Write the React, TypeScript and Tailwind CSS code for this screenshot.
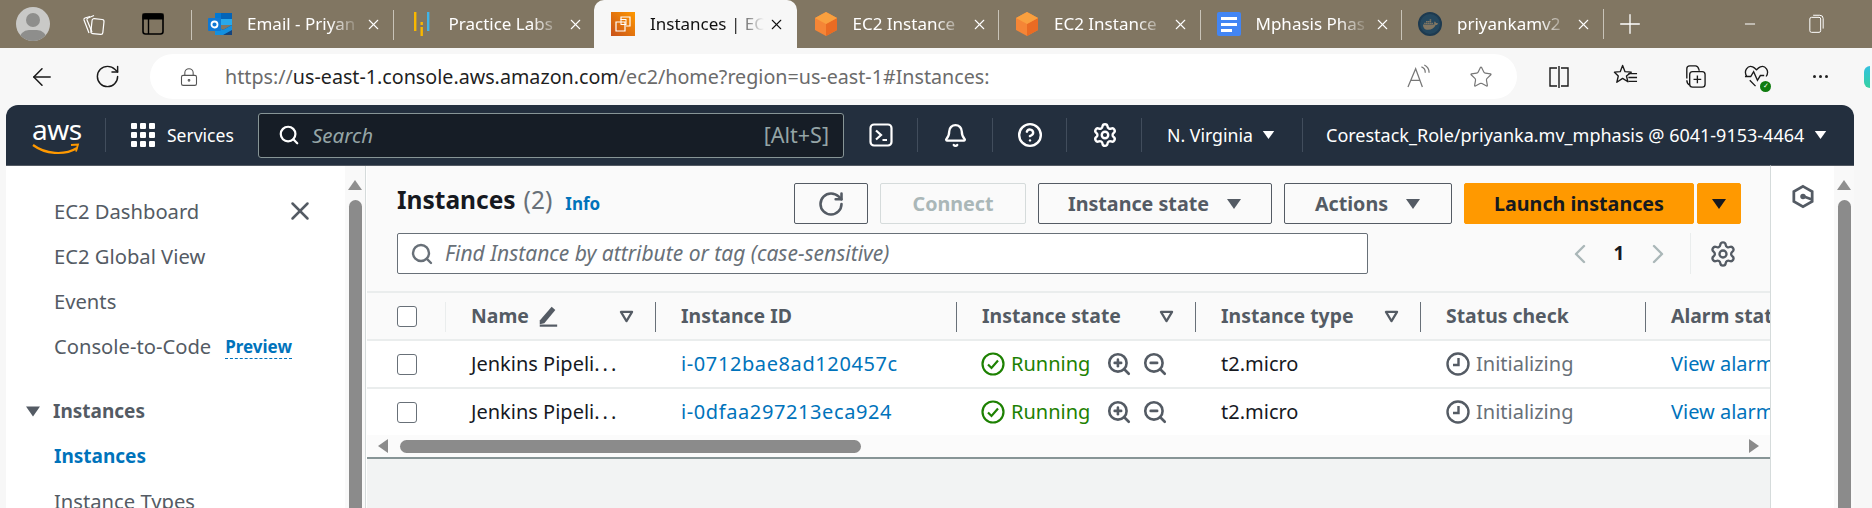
import React from 'react';
import {
  ArrowLeft,
  Bell,
  CircleHelp,
  Minus,
  Plus,
  RotateCw,
  Search,
  Settings,
  X,
  ChevronLeft,
  ChevronRight,
  Star,
  LockKeyhole,
  ZoomIn,
  ZoomOut,
} from 'lucide-react';
import { FaDocker } from 'react-icons/fa';

const Caret = ({ className = '' }: { className?: string }) => (
  <svg viewBox="0 0 16 12" className={className}>
    <path d="M1 1h14L8 11z" fill="currentColor" />
  </svg>
);

const FilterCaret = () => (
  <svg viewBox="0 0 16 14" className="w-[15px] h-[13px] text-[#545b64]">
    <path d="M2 2h12L8 12z" fill="none" stroke="currentColor" strokeWidth="2.4" strokeLinejoin="round" />
  </svg>
);

const Outlook = () => (
  <svg viewBox="0 0 24 24" className="w-6 h-6">
    <rect x="7" y="1" width="17" height="12" fill="#28a8ea" />
    <rect x="7" y="1" width="6" height="6" fill="#0078d4" />
    <rect x="13" y="1" width="11" height="6" fill="#0364b8" />
    <path d="M7 13l8 5 9-5v10H7z" fill="#14447d" />
    <path d="M7 13l8 5 9-5v5l-9 5H7z" fill="#1490df" />
    <rect x="0" y="6" width="13" height="13" rx="1" fill="#0f78d4" />
    <circle cx="6.5" cy="12.5" r="3" fill="none" stroke="#fff" strokeWidth="1.8" />
  </svg>
);

const LabsIcon = () => (
  <svg viewBox="0 0 16 24" className="w-4 h-6">
    <rect x="0" y="0" width="2.4" height="19" fill="#f9b800" />
    <rect x="6.5" y="10" width="2.4" height="3" fill="#f9b800" />
    <rect x="6.5" y="15" width="2.4" height="9" fill="#f9b800" />
    <rect x="13" y="0" width="2.4" height="19" fill="#3fb4e8" />
  </svg>
);

const Ec2Icon = () => (
  <svg viewBox="0 0 24 24" className="w-6 h-6">
    <defs>
      <linearGradient id="ec2g" x1="0" y1="1" x2="1" y2="0">
        <stop offset="0" stopColor="#c8511b" />
        <stop offset="1" stopColor="#ff9900" />
      </linearGradient>
    </defs>
    <rect width="24" height="24" fill="url(#ec2g)" />
    <path d="M10 8V5h9v9h-4M5 10h9v9H5z" fill="none" stroke="#fff" strokeWidth="1.2" />
    <rect x="10" y="7.5" width="5" height="5" fill="none" stroke="#fff" strokeWidth="1" />
  </svg>
);

const Cube = () => (
  <svg viewBox="0 0 22 24" className="w-[22px] h-6">
    <path d="M11 0l11 6v12l-11 6L0 18V6z" fill="#f58536" />
    <path d="M11 12l11-6v12l-11 6z" fill="#ea6b23" />
    <path d="M11 0l11 6-11 6L0 6z" fill="#f9a03f" />
  </svg>
);

const Docs = () => (
  <svg viewBox="0 0 24 24" className="w-6 h-6">
    <rect width="24" height="24" rx="2" fill="#4285f4" />
    <rect x="4" y="5" width="16" height="3" fill="#fff" />
    <rect x="4" y="11" width="16" height="3" fill="#fff" />
    <rect x="4" y="17" width="11" height="3" fill="#fff" />
  </svg>
);

const tabs = [
  { icon: <Outlook />, title: 'Email - Priyan' },
  { icon: <LabsIcon />, title: 'Practice Labs' },
  { icon: <Ec2Icon />, title: 'Instances | EC', active: true },
  { icon: <Cube />, title: 'EC2 Instance', noDivider: true },
  { icon: <Cube />, title: 'EC2 Instance' },
  { icon: <Docs />, title: 'Mphasis Phas' },
  {
    icon: (
      <span className="w-6 h-6 rounded-full bg-[#24475e] border-2 border-[#1d3a50] flex items-center justify-center">
        <FaDocker className="w-[15px] h-[15px] text-[#817662]" />
      </span>
    ),
    title: 'priyankamv2',
  },
];

const TabStrip = () => (
  <div className="h-12 bg-[#817662] flex items-center shrink-0">
    <div className="w-[191px] flex items-center shrink-0">
      <div className="ml-4 w-[34px] h-[34px] rounded-full bg-[#c9c9c7] relative overflow-hidden shrink-0">
        <span className="absolute left-[10px] top-[6px] w-[14px] h-[14px] rounded-full bg-[#8e8e8c]" />
        <span className="absolute left-[3px] top-[23px] w-7 h-5 rounded-full bg-[#8e8e8c]" />
      </div>
      <svg viewBox="0 0 26 26" className="ml-[30px] w-[26px] h-[26px] text-white" fill="none" stroke="currentColor" strokeWidth="1.2">
        <path d="M9 22L4 9c-.3-1 .1-1.6 1-2l5-1.5" />
        <path d="M12 21L7 9c-.3-1 .1-1.6 1-2l6-2.500" />
        <rect x="11.500" y="8" width="12" height="15" rx="2" transform="rotate(6 17 15)" />
      </svg>
      <svg viewBox="0 0 22 22" className="ml-[36px] w-[22px] h-[22px] text-black" fill="none" stroke="currentColor">
        <rect x="1" y="1" width="20" height="20" rx="2.500" strokeWidth="1.600" />
        <rect x="1" y="1" width="20" height="5" fill="currentColor" strokeWidth="1" />
        <path d="M6.500 6v15" strokeWidth="1.400" />
      </svg>
    </div>
    {tabs.map((t, i) => (
      <div
        key={i}
        className={
          t.active
            ? 'w-[202.5px] h-12 shrink-0 bg-[#f7f7f7] rounded-t-[10px] flex items-center pl-[17px] text-[#111]'
            : 'w-[201.5px] h-12 shrink-0 flex items-center pl-[17px] text-white relative'
        }
      >
        {!t.active && !t.noDivider && <span className="absolute left-0 top-[10px] h-[30px] w-px bg-[#c8c3b8]" />}
        <span className="w-6 flex justify-center shrink-0">{t.icon}</span>
        <span className="ml-[15px] w-[114px] text-[17px] whitespace-nowrap overflow-hidden [mask-image:linear-gradient(to_right,black_72%,transparent)]">
          {t.title}
        </span>
        <X className="ml-[4px] w-[17px] h-[17px] shrink-0" strokeWidth={1.5} />
      </div>
    ))}
    <span className="h-[30px] w-px bg-[#c8c3b8]" />
    <Plus className="ml-[10px] w-8 h-8 text-white" strokeWidth={1} />
    <Minus className="ml-[96px] w-[16px] h-[16px] text-white" strokeWidth={1.5} />
    <svg viewBox="0 0 18 24" className="ml-[51px] w-[15px] h-[22px] text-white" fill="none" stroke="currentColor" strokeWidth="1.200">
      <rect x="1" y="4" width="13" height="18" rx="2" />
      <path d="M5 1.500h8a4 4 0 0 1 4 4v12" />
    </svg>
  </div>
);

const Toolbar = () => (
  <div className="h-[57px] bg-[#f7f7f7] flex items-center shrink-0 text-[#1a1a1a] relative overflow-hidden">
    <ArrowLeft className="ml-[28px] w-7 h-7 shrink-0" strokeWidth={1.3} />
    <RotateCw className="ml-[38px] w-[27px] h-[27px] shrink-0" strokeWidth={1.3} />
    <div className="ml-[29px] w-[1367px] h-[45px] bg-white rounded-full flex items-center shrink-0">
      <LockKeyhole className="ml-[29px] w-[20px] h-[24px] text-[#555] shrink-0" strokeWidth={1.3} />
      <span className="ml-[26px] text-[19.7px] text-[#6b6b6b] whitespace-nowrap">
        https://<span className="text-[#1f1f1f]">us-east-1.console.aws.amazon.com</span>/ec2/home?region=us-east-1#Instances:
      </span>
      <span className="ml-auto flex items-center">
        <svg viewBox="0 0 26 26" className="w-[25px] h-[25px] text-[#777]" fill="none" stroke="currentColor" strokeWidth="1.300">
          <path d="M1 24L9 5l7 19M4 17h10" />
          <path d="M15 3c3 1 4 3 4 6M18 1c3 1.500 5 4 5 8" />
        </svg>
        <Star className="ml-[37px] mr-[24px] w-[24px] h-[24px] text-[#777]" strokeWidth={1.2} />
      </span>
    </div>
    <svg viewBox="0 0 24 24" className="ml-[30px] w-6 h-6 shrink-0" fill="none" stroke="currentColor" strokeWidth="1.400">
      <path d="M10 3H3v18h7M14 3h7v18h-7M12 1v22" />
    </svg>
    <svg viewBox="0 0 26 26" className="ml-[42px] w-[25px] h-[25px] shrink-0" fill="none" stroke="currentColor" strokeWidth="1.400">
      <path d="M10 1.500l2.500 6.500 6.500.5-5 4 1.500 6-5.500-3.500-6 4 1.500-6.500-4-4 6-.5z" strokeLinejoin="round" />
      <path d="M16 10h9M16 14h9M16 18h9" />
    </svg>
    <svg viewBox="0 0 26 26" className="ml-[44px] w-[25px] h-[25px] shrink-0" fill="none" stroke="currentColor" strokeWidth="1.400">
      <path d="M5 15V5a3 3 0 0 1 3-3h6c3 0 3 2 4 5M8 22c-2-1-3-3-3-5" />
      <rect x="8" y="8" width="16" height="16" rx="3" />
      <path d="M16 12v8M12 16h8" />
    </svg>
    <span className="ml-[37px] relative w-[25px] h-[25px] shrink-0">
      <svg viewBox="0 0 26 26" className="w-[25px] h-[25px]" fill="none" stroke="currentColor" strokeWidth="1.400">
        <path d="M3 13C-1 7 4 1 9 3c2 .8 3 2 4 3 1-1 2-2.200 4-3 5-2 10 4 6 10" />
        <path d="M1 13h6l3-5 4 9 3-5h4M6 17l6 6" />
      </svg>
      <span className="absolute -right-[2px] -bottom-[3px] w-[11px] h-[11px] rounded-full bg-[#107c10] flex items-center justify-center text-white text-[7px]">✓</span>
    </span>
    <span className="ml-[44px] flex gap-[3px] shrink-0">
      <span className="w-[3px] h-[3px] rounded-full bg-[#222]" />
      <span className="w-[3px] h-[3px] rounded-full bg-[#222]" />
      <span className="w-[3px] h-[3px] rounded-full bg-[#222]" />
    </span>
    <span className="ml-[36px] w-[6px] h-[22px] rounded-l-full bg-gradient-to-b from-[#35c1e0] to-[#37d1a0] shrink-0" />
  </div>
);

const NavDivider = () => <span className="block w-px h-[34px] bg-[#414d5c] shrink-0" />;

const TopNav = () => (
  <div className="ml-[6px] w-[1848px] h-[60px] bg-[#232f3e] rounded-t-[12px] flex items-center shrink-0 text-white text-[17.5px]">
    <div className="ml-[26px] w-[48px] h-[44px] relative shrink-0">
      <span className="absolute left-0 -top-[6px] text-[28px] leading-[44px] tracking-[-0.5px]">aws</span>
      <svg viewBox="0 0 48 14" className="absolute left-0 top-[30px] w-[48px] h-[14px]" fill="none" stroke="#ff9900" strokeWidth="2.200">
        <path d="M1 2c12 9 31 11 44 3" />
        <path d="M39 2l7-.5-2 7" strokeWidth="1.800" />
      </svg>
    </div>
    <span className="ml-[25px]"><NavDivider /></span>
    <div className="ml-[25px] w-6 grid grid-cols-3 gap-[3px] shrink-0">
      {Array.from({ length: 9 }).map((_, i) => (
        <span key={i} className="w-[6px] h-[6px] rounded-[1px] bg-white" />
      ))}
    </div>
    <span className="ml-3 w-[91px]">Services</span>
    <div className="w-[586px] h-[45px] bg-[#161d26] border border-[#879596] rounded-[3px] flex items-center shrink-0">
      <Search className="ml-[19px] w-[22px] h-[22px]" strokeWidth={2.4} />
      <span className="ml-[12px] italic text-[20.5px] text-[#95a5a6]">Search</span>
      <span className="ml-auto mr-[14px] text-[21.5px] text-[#95a5a6]">[Alt+S]</span>
    </div>
    <svg viewBox="0 0 24 24" className="ml-[25px] w-6 h-6" fill="none" stroke="#fff" strokeWidth="2.200">
      <rect x="1.500" y="1.500" width="21" height="21" rx="3.500" />
      <path d="M7 7.500l5 4.500-5 4.500M13.500 17H18" />
    </svg>
    <span className="ml-[24px]"><NavDivider /></span>
    <Bell className="ml-[25px] w-[25px] h-[25px]" strokeWidth={2.2} />
    <span className="ml-[24px]"><NavDivider /></span>
    <CircleHelp className="ml-[24px] w-[26px] h-[26px]" strokeWidth={2.2} />
    <span className="ml-[23px]"><NavDivider /></span>
    <Settings className="ml-[25px] w-[26px] h-[26px]" strokeWidth={2.2} />
    <span className="ml-[23px]"><NavDivider /></span>
    <span className="ml-[25px] w-[95px] text-[17.7px] whitespace-nowrap">N. Virginia</span>
    <Caret className="w-[13px] h-[10px]" />
    <span className="ml-[27px]"><NavDivider /></span>
    <span className="ml-[23px] w-[480px] text-[18px] whitespace-nowrap">Corestack_Role/priyanka.mv_mphasis @ 6041-9153-4464</span>
    <Caret className="ml-[8px] w-[13px] h-[10px]" />
  </div>
);

const ScrollBar = () => (
  <div className="w-[20px] shrink-0 flex flex-col items-center bg-[#f9f9f9]">
    <svg viewBox="0 0 14 10" className="mt-[14px] w-[14px] h-[10px]">
      <path d="M7 0l7 10H0z" fill="#8f8f8f" />
    </svg>
    <div className="mt-[10px] w-[13px] flex-1 bg-[#8b8b8b] rounded-t-full" />
  </div>
);

const navLinks = ['EC2 Dashboard', 'EC2 Global View', 'Events'];

const Sidebar = () => (
  <div className="w-[361px] ml-[6px] shrink-0 bg-white flex border-t border-[#545b64] text-[20.2px] text-[#545b64]">
    <div className="w-[339px] shrink-0 overflow-hidden">
      {navLinks.map((l, i) => (
        <div key={l} className="h-[45px] flex items-center pl-[48px] first:mt-[23px] relative whitespace-nowrap">
          {l}
          {i === 0 && <X className="absolute left-[279px] top-[7px] w-[30px] h-[30px]" strokeWidth={2} />}
        </div>
      ))}
      <div className="h-[45px] flex items-center pl-[48px] whitespace-nowrap">
        Console-to-Code
        <span className="ml-[14px] text-[17px] font-bold text-[#0073bb] border-b border-dashed border-[#0073bb] leading-[23px]">Preview</span>
      </div>
      <div className="h-[45px] mt-[20px] flex items-center pl-[19px] font-bold text-[19px]">
        <Caret className="w-[16px] h-[13px]" />
        <span className="ml-[12px]">Instances</span>
      </div>
      <div className="h-[45px] flex items-center pl-[48px] font-bold text-[19px] text-[#0073bb]">Instances</div>
      <div className="h-[45px] flex items-center pl-[48px]">Instance Types</div>
    </div>
    <ScrollBar />
    <div className="w-px bg-[#d5dbdb] shrink-0" />
  </div>
);

const Btn = ({ className = '', children }: { className?: string; children: React.ReactNode }) => (
  <div className={`h-[41px] flex items-center justify-center rounded-[2px] border font-bold text-[19.7px] shrink-0 ${className}`}>
    {children}
  </div>
);

const HeadCell = ({ label, extra, filter, divider = true }: { label: string; extra?: React.ReactNode; filter?: boolean; divider?: boolean }) => (
  <div className="h-full pl-[25px] pr-[22px] flex items-center relative whitespace-nowrap font-bold text-[19.4px] text-[#545b64] overflow-hidden">
    {label}
    {extra}
    {filter && <span className="ml-auto"><FilterCaret /></span>}
    {divider && <span className="absolute right-0 top-[9px] h-[30px] w-px bg-[#687078]" />}
  </div>
);

const Checkbox = () => <span className="w-5 h-[21px] border border-[#687078] rounded-[3px] bg-white" />;

const columns = 'grid grid-cols-[79px_210px_301px_239px_225px_225px_124px]';

const rows = [
  { id: 'i-0712bae8ad120457c' },
  { id: 'i-0dfaa297213eca924' },
];

const Row = ({ id }: { id: string }) => (
  <div className={`${columns} h-[48px] bg-white border-t-2 border-[#eaeded] text-[20px] text-[#16191f] items-center whitespace-nowrap overflow-hidden`}>
    <div className="pl-[30px] flex items-center"><Checkbox /></div>
    <div className="pl-[25px]">
      Jenkins Pipeli<span className="tracking-[3px]">...</span>
    </div>
    <div className="pl-[25px] text-[#0073bb] tracking-[0.6px]">{id}</div>
    <div className="pl-[24px] flex items-center">
      <svg viewBox="0 0 24 24" className="w-6 h-6 text-[#1d8102]" fill="none" stroke="currentColor" strokeWidth="2.200">
        <circle cx="12" cy="12" r="10.500" />
        <path d="M7 12.500l3.500 3.500L17 8.500" />
      </svg>
      <span className="ml-[6px] text-[#1d8102]">Running</span>
      <ZoomIn className="ml-[16px] w-[26px] h-[26px] text-[#545b64]" strokeWidth={2.4} />
      <ZoomOut className="ml-[10px] w-[26px] h-[26px] text-[#545b64]" strokeWidth={2.4} />
    </div>
    <div className="pl-[25px]">t2.micro</div>
    <div className="pl-[25px] flex items-center text-[#687078]">
      <svg viewBox="0 0 24 24" className="w-6 h-6 text-[#545b64]" fill="none" stroke="currentColor" strokeWidth="2.400">
        <circle cx="12" cy="12" r="10.500" />
        <path d="M12.500 6v7H7" />
      </svg>
      <span className="ml-[6px]">Initializing</span>
    </div>
    <div className="pl-[25px] text-[#0073bb] overflow-hidden">View alarms</div>
  </div>
);

const MainPanel = () => (
  <div className="w-[1403px] shrink-0 bg-[#f2f3f3] border-t border-[#545b64] overflow-hidden">
    <div className="bg-[#fafafa] pt-[17px]">
      <div className="h-[41px] flex items-center pl-[30px]">
        <span className="text-[24.5px] font-bold text-[#16191f] -mt-[6px]">Instances</span>
        <span className="ml-2 text-[24.5px] text-[#687078] -mt-[6px]">(2)</span>
        <span className="ml-[13px] text-[17px] font-bold text-[#0073bb] mt-[1px]">Info</span>
        <Btn className="ml-auto w-[74px] border-[#545b64]">
          <RotateCw className="w-[28px] h-[28px] text-[#545b64]" strokeWidth={2.2} />
        </Btn>
        <Btn className="ml-[12px] w-[146px] border-[#d5dbdb] text-[#aab7b8]">Connect</Btn>
        <Btn className="ml-[12px] w-[234px] border-[#545b64] text-[#545b64] gap-[17px]">
          Instance state <Caret className="w-[16px] h-[12px]" />
        </Btn>
        <Btn className="ml-[12px] w-[168px] border-[#545b64] text-[#545b64] gap-[17px]">
          Actions <Caret className="w-[16px] h-[12px]" />
        </Btn>
        <Btn className="ml-[12px] w-[230px] bg-[#ff9900] border-[#ff9900] text-[#16191f]">Launch instances</Btn>
        <Btn className="ml-[3px] w-[44px] bg-[#ff9900] border-[#ff9900] text-[#16191f]">
          <Caret className="w-[16px] h-[12px]" />
        </Btn>
        <span className="w-[29px] shrink-0" />
      </div>
      <div className="mt-[9px] h-[41px] flex items-center pl-[30px]">
        <div className="w-[971px] h-[41px] bg-white border border-[#687078] rounded-[2px] flex items-center shrink-0">
          <Search className="ml-[12px] w-[24px] h-[24px] text-[#687078]" strokeWidth={2.4} />
          <span className="ml-[11px] italic text-[21px] text-[#687078] whitespace-nowrap">Find Instance by attribute or tag (case-sensitive)</span>
        </div>
        <ChevronLeft className="ml-[196px] w-[32px] h-[32px] text-[#aab7b8]" strokeWidth={1.8} />
        <span className="ml-[15px] w-4 text-center font-bold text-[19px] text-[#16191f]">1</span>
        <ChevronRight className="ml-[15px] w-[32px] h-[32px] text-[#aab7b8]" strokeWidth={1.8} />
        <span className="ml-[16px] h-[41px] w-px bg-[#eaeded]" />
        <Settings className="ml-[18px] w-[28px] h-[28px] text-[#545b64]" strokeWidth={2} />
      </div>
      <div className="h-[17px]" />
      <div className={`${columns} h-[48px] border-t-2 border-[#eaeded] items-center`}>
        <div className="relative h-full pl-[30px] flex items-center">
          <Checkbox />
          <span className="absolute right-0 top-[9px] h-[30px] w-px bg-[#eaeded]" />
        </div>
        <HeadCell
          label="Name"
          filter
          extra={
            <svg viewBox="0 0 22 24" className="ml-[8px] w-[22px] h-[22px] text-[#545b64]">
              <path d="M2 17L15 2l4 3.500L7 20l-5 1z" fill="currentColor" />
              <path d="M2 22.500h19" stroke="currentColor" strokeWidth="2.400" />
            </svg>
          }
        />
        <HeadCell label="Instance ID" />
        <HeadCell label="Instance state" filter />
        <HeadCell label="Instance type" filter />
        <HeadCell label="Status check" />
        <HeadCell label="Alarm status" divider={false} />
      </div>
      {rows.map((r) => (
        <Row key={r.id} id={r.id} />
      ))}
      <div className="h-[24px] bg-[#fbfbfb] border-b-2 border-[#879596] flex items-center relative">
        <svg viewBox="0 0 10 14" className="ml-[11px] w-[10px] h-[14px]">
          <path d="M0 7l10-7v14z" fill="#8b8b8b" />
        </svg>
        <div className="ml-[12px] w-[461px] h-[13px] bg-[#8b8b8b] rounded-full" />
        <svg viewBox="0 0 10 14" className="ml-auto mr-[11px] w-[10px] h-[14px]">
          <path d="M10 7L0 0v14z" fill="#8b8b8b" />
        </svg>
      </div>
    </div>
  </div>
);

const RightRail = () => (
  <div className="w-[84px] shrink-0 flex bg-white border-t border-[#545b64] border-l border-l-[#d5dbdb]">
    <div className="w-[64px] flex justify-center pt-[18px]">
      <svg viewBox="0 0 24 26" className="w-[22px] h-[25px] text-[#545b64]" fill="none" stroke="currentColor" strokeWidth="3">
        <path d="M12 2l10 5.500v11L12 24 2 18.500v-11z" />
        <circle cx="12" cy="13" r="3" fill="currentColor" stroke="none" />
        <path d="M13 13l8 3" />
      </svg>
    </div>
    <ScrollBar />
  </div>
);

export default function App() {
  return (
    <div className="w-[1872px] h-[508px] overflow-hidden flex flex-col bg-[#f7f7f7] font-['Noto_Sans',sans-serif]">
      <TabStrip />
      <Toolbar />
      <TopNav />
      <div className="flex flex-1 min-h-0">
        <Sidebar />
        <MainPanel />
        <RightRail />
      </div>
    </div>
  );
}
